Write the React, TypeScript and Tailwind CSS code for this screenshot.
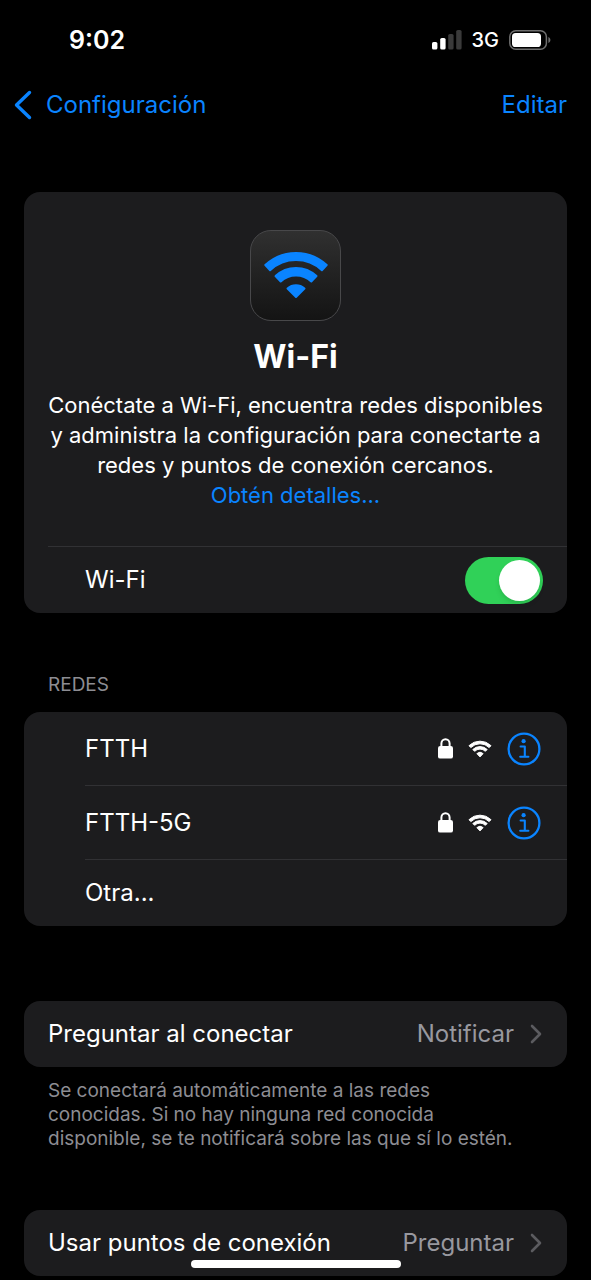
import { useState } from 'react';
import type { ReactNode } from 'react';

const NETWORKS = ['FTTH', 'FTTH-5G'];

function SignalBars() {
  return (
    <svg width="30" height="20" viewBox="0 0 30 20" aria-hidden="true">
      <rect x="0" y="12" width="5.4" height="7.5" rx="1.6" fill="#fff" />
      <rect x="8.2" y="8" width="5.4" height="11.5" rx="1.6" fill="#fff" />
      <rect x="16.2" y="4" width="5.4" height="15.5" rx="1.6" fill="#3a3a3a" />
      <rect x="24.2" y="0" width="5.4" height="19.5" rx="1.6" fill="#3a3a3a" />
    </svg>
  );
}

function Battery() {
  return (
    <svg width="42" height="20" viewBox="0 0 42 20" aria-hidden="true">
      <rect x="0.8" y="0.8" width="36.6" height="18.4" rx="6" fill="none" stroke="#6e6e6e" strokeWidth="1.5" />
      <rect x="3" y="3" width="29" height="14" rx="3.6" fill="#fff" />
      <path d="M39.4 7v6c1.2-.5 2-1.7 2-3s-.8-2.5-2-3Z" fill="#6e6e6e" />
    </svg>
  );
}

function WifiGlyph({ className }: { className: string }) {
  return (
    <svg
      viewBox="0 0 64 48"
      className={className}
      fill="currentColor"
      stroke="currentColor"
      strokeWidth="2"
      strokeLinejoin="round"
      aria-hidden="true"
    >
      <path d="M1.3 13.1A45 45 0 0 1 62.700 13.100L57.900 18.200A38 38 0 0 0 6.100 18.200Z" />
      <path d="M11.500 24.100A30 30 0 0 1 52.500 24.100L47.300 29.500A22.500 22.500 0 0 0 16.700 29.500Z" />
      <path d="M23.500 36.500A13 13 0 0 1 40.500 36.500L32 45Z" />
    </svg>
  );
}

// heavier cut of the same symbol for row size
function WifiSmallGlyph() {
  return (
    <svg
      width="24"
      height="18"
      viewBox="0 0 24 18"
      className="ml-[15px]"
      fill="currentColor"
      stroke="currentColor"
      strokeLinejoin="round"
      aria-hidden="true"
    >
      <path d="M1 5.7A15.600 15.600 0 0 1 23 5.700L21.200 7.600A13 13 0 0 0 2.800 7.600Z" />
      <path d="M4.800 9.500A10.300 10.300 0 0 1 19.200 9.500L17.400 11.300A7.700 7.700 0 0 0 6.600 11.300Z" />
      <path d="M8.900 13.600A4.600 4.600 0 0 1 15.100 13.600L12 16.900Z" />
    </svg>
  );
}

function LockGlyph() {
  return (
    <svg width="15" height="21" viewBox="0 0 15 21" aria-hidden="true">
      <path d="M3.4 9V5.6a4.1 4.4 0 0 1 8.2 0V9" fill="none" stroke="#fff" strokeWidth="2" />
      <rect x="0" y="8" width="15" height="12.6" rx="2.2" fill="#fff" />
    </svg>
  );
}

function InfoGlyph() {
  return (
    <svg width="34" height="34" viewBox="0 0 34 34" fill="none" stroke="currentColor" aria-hidden="true">
      <circle cx="17" cy="17" r="15.4" strokeWidth="2.3" />
      <circle cx="16.6" cy="9.2" r="2.1" fill="currentColor" stroke="none" />
      <path d="M13.6 14.5h4.200v10.300M13.200 24.800h8.200" strokeWidth="2.1" strokeLinecap="round" strokeLinejoin="round" />
    </svg>
  );
}

function Chevron() {
  return (
    <svg width="12" height="20" viewBox="0 0 12 20" fill="none" aria-hidden="true">
      <path d="M2 2l8 8-8 8" stroke="#5b5b5f" strokeWidth="2.6" strokeLinecap="round" strokeLinejoin="round" />
    </svg>
  );
}

function Card({ children }: { children: ReactNode }) {
  return <div className="overflow-hidden rounded-2xl bg-[#1c1c1e]">{children}</div>;
}

function OptionRow({ label, value }: { label: string; value: string }) {
  return (
    <Card>
      <button type="button" className="flex h-[66px] w-full items-center pr-[25px] pl-6 text-left">
        <span className="flex-1">{label}</span>
        <span className="mr-4 text-[#98989f]">{value}</span>
        <Chevron />
      </button>
    </Card>
  );
}

export default function App() {
  const [enabled, setEnabled] = useState(true);

  return (
    <div className="min-h-screen bg-black pb-1 font-['Inter',sans-serif] text-[24px] leading-8 text-white">
      <header>
        <div className="flex h-20 items-center justify-between pr-10 pl-[69px]">
          <span className="text-[25px] font-semibold">9:02</span>
          <div className="flex items-center gap-[10px]">
            <SignalBars />
            <span className="text-[20px] font-medium">3G</span>
            <Battery />
          </div>
        </div>
        <nav className="flex h-[50px] items-center justify-between pr-6 pl-3 text-[#0a84ff]">
          <a href="#configuracion" className="flex items-center gap-[14px]">
            <svg width="20" height="30" viewBox="0 0 20 30" fill="none" aria-hidden="true">
              <path d="M17.5 2.5L4.5 15l13 12.5" stroke="currentColor" strokeWidth="3.4" strokeLinecap="round" strokeLinejoin="round" />
            </svg>
            Configuración
          </a>
          <button type="button">Editar</button>
        </nav>
      </header>

      <main className="px-6 pt-[62px]">
        <Card>
          <div className="flex flex-col items-center px-4 pt-[38px] pb-9 text-center">
            <div className="flex size-[91px] items-center justify-center rounded-[21px] border border-[#48484a] bg-linear-to-b from-[#303030] to-[#141414] text-[#0a84ff]">
              <WifiGlyph className="h-12 w-16" />
            </div>
            <h1 className="mt-4 text-[32px] leading-10 font-bold">Wi-Fi</h1>
            <p className="mt-[13px] text-[22px] leading-[30px]">
              Conéctate a Wi-Fi, encuentra redes disponibles
              <br />y administra la configuración para conectarte a
              <br />
              redes y puntos de conexión cercanos.
              <br />
              <a href="#detalles" className="text-[#0a84ff]">
                Obtén detalles...
              </a>
            </p>
          </div>
          <div className="pl-6">
            <div className="flex h-[67px] items-center justify-between border-t border-[#313134] pr-6 pl-[37px]">
              <label htmlFor="wifi-toggle">Wi-Fi</label>
              <input
                id="wifi-toggle"
                type="checkbox"
                role="switch"
                checked={enabled}
                onChange={(e) => setEnabled(e.target.checked)}
                className="flex h-[47px] w-[78px] appearance-none items-center rounded-full bg-[#39393d] p-[3px] before:size-[41px] before:rounded-full before:bg-white before:shadow-md checked:justify-end checked:bg-[#30d158]"
              />
            </div>
          </div>
        </Card>

        <h2 className="mt-[58px] mb-[13px] px-6 text-[19px] leading-7 text-[#8d8d93]">REDES</h2>
        <Card>
          <ul className="pl-[61px]">
            {NETWORKS.map((name) => (
              <li key={name} className="flex h-[74px] items-center border-b border-[#313134] pr-[26px]">
                <span className="flex-1">{name}</span>
                <LockGlyph />
                <WifiSmallGlyph />
                <button type="button" aria-label={`Información de ${name}`} className="ml-[15px] text-[#0a84ff]">
                  <InfoGlyph />
                </button>
              </li>
            ))}
            <li>
              <button type="button" className="flex h-[66px] w-full items-center text-left">
                Otra...
              </button>
            </li>
          </ul>
        </Card>

        <section className="mt-[75px]">
          <OptionRow label="Preguntar al conectar" value="Notificar" />
          <p className="mt-3 px-6 text-[19px] leading-6 text-[#8d8d93]">
            Se conectará automáticamente a las redes
            <br />
            conocidas. Si no hay ninguna red conocida
            <br />
            disponible, se te notificará sobre las que sí lo estén.
          </p>
        </section>

        <section className="mt-[59px]">
          <OptionRow label="Usar puntos de conexión" value="Preguntar" />
        </section>
      </main>

      <div className="fixed bottom-3 left-1/2 h-2 w-[210px] -translate-x-1/2 rounded-full bg-white" />
    </div>
  );
}
